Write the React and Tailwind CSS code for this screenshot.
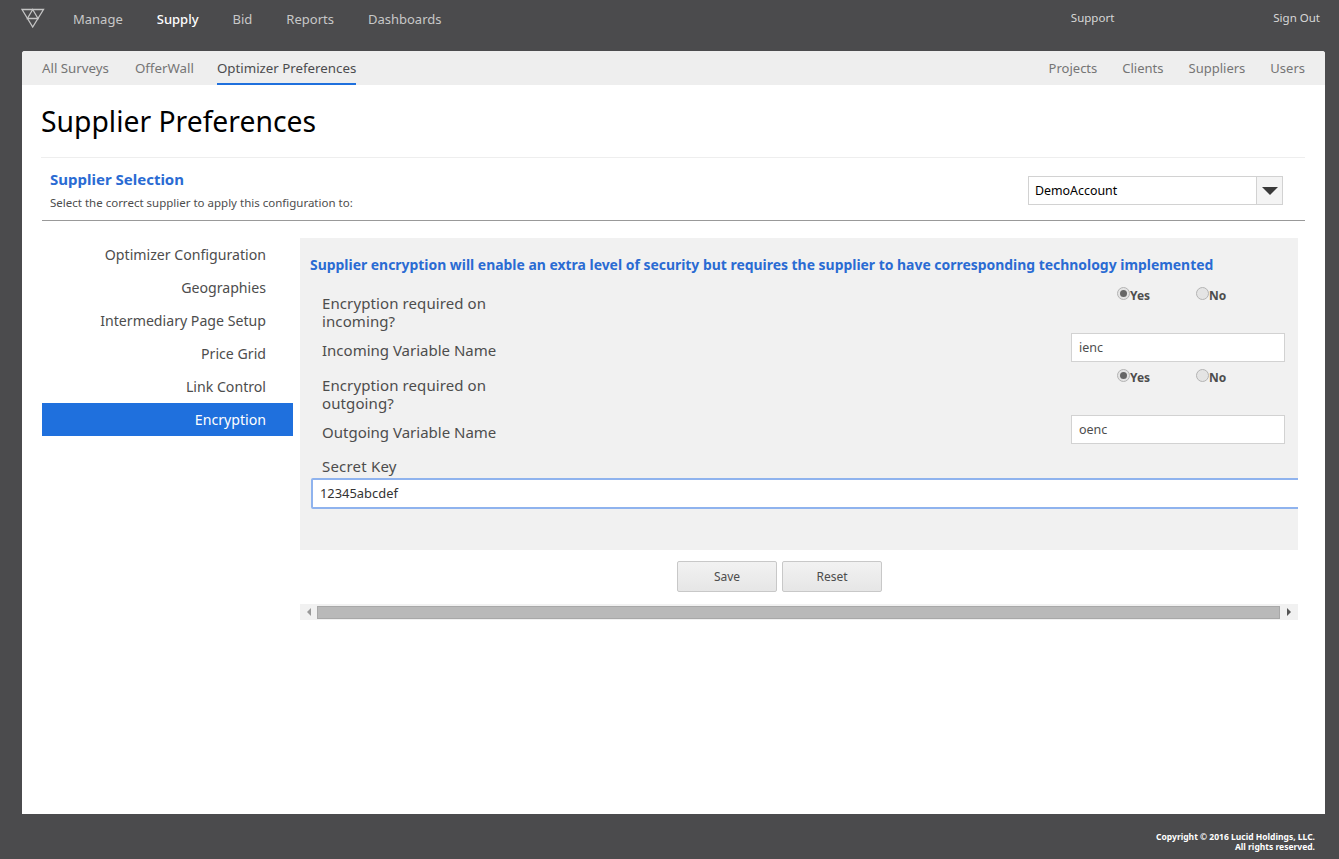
const font = "font-['Noto_Sans','Open_Sans',sans-serif]";

const mainNav = ['Manage', 'Supply', 'Bid', 'Reports', 'Dashboards'];
const sideNav = ['Optimizer Configuration', 'Geographies', 'Intermediary Page Setup', 'Price Grid', 'Link Control', 'Encryption'];

const Logo = () => (
  <svg width="24" height="20" viewBox="0 0 24 20" fill="none" stroke="#c4c4c4" strokeWidth="1.3">
    <path d="M1 1.5H22.5L11.7 19Z" />
    <path d="M11.7 1.5L17 10.5H6.4Z" />
  </svg>
);

const Radio = ({ checked, label }) => (
  <label className="flex items-start">
    <span className="flex h-[13px] w-[13px] items-center justify-center rounded-full border border-[#b4b4b4] bg-[#e4e4e4]">
      {checked && <span className="h-[7px] w-[7px] rounded-full bg-[#666]" />}
    </span>
    <span className="mt-[1px] text-[12px] leading-[16px] font-bold text-[#4d4d4d]">{label}</span>
  </label>
);

const RadioRow = ({ first, second }) => (
  <div className="flex h-[40px] justify-between pr-[13px] pl-[22px]">
    <div className="w-[200px] pt-[1px] text-[15px] leading-[18px] tracking-[0.1px] text-[#4d4d4d]">
      {first}
      <br />
      {second}
    </div>
    <div className="mt-[-6px] flex w-[168px]">
      <div className="w-[79px]">
        <Radio checked label="Yes" />
      </div>
      <Radio label="No" />
    </div>
  </div>
);

const TextRow = ({ label, value }) => (
  <div className="flex h-[42px] justify-between pr-[13px] pl-[22px]">
    <div className="pt-[8px] text-[15px] leading-[18px] text-[#4d4d4d]">{label}</div>
    <div className="h-[29px] w-[214px] border border-[#d2d2d2] bg-white pl-[7px] text-[12.5px] leading-[27px] text-[#4d4d4d]">{value}</div>
  </div>
);

export default function App() {
  return (
    <div className={`flex h-[859px] flex-col overflow-hidden bg-[#4b4b4d] ${font}`}>
      <header className="flex h-[51px] shrink-0 items-start">
        <div className="mt-[8px] ml-[21px] w-[52px]">
          <Logo />
        </div>
        <nav className="mt-[10px] flex gap-[34px] text-[13px] leading-[18px]">
          {mainNav.map((item) => (
            <span key={item} className={item === 'Supply' ? 'font-medium text-white' : 'text-[#c8c8c8]'}>
              {item}
            </span>
          ))}
        </nav>
        <div className="mt-[10px] ml-auto flex text-[11.5px] leading-[16px] text-[#d8d8d8]">
          <span className="mr-[159px]">Support</span>
          <span className="mr-[19px]">Sign Out</span>
        </div>
      </header>

      <main className="ml-[22px] h-[763px] w-[1303px] shrink-0 rounded-t-[3px] bg-white">
        <div className="flex h-[34px] justify-between rounded-t-[3px] bg-[#eeeeee] px-[20px] leading-[34px] text-[#757575]">
          <div className="flex text-[13.3px]">
            <span className="mr-[26px]">All Surveys</span>
            <span className="mr-[23px]">OfferWall</span>
            <span className="h-[34px] border-b-2 border-[#1f70dd] text-[#4b4b4d]">Optimizer Preferences</span>
          </div>
          <div className="flex gap-[25px] text-[13px]">
            <span>Projects</span>
            <span>Clients</span>
            <span>Suppliers</span>
            <span>Users</span>
          </div>
        </div>

        <div className="px-[20px]">
          <h1 className="ml-[-1px] h-[73px] border-b border-[#eeeeee] pt-[16px] text-[28.3px] leading-[40px] font-normal text-black">Supplier Preferences</h1>

          <div className="flex h-[63px] justify-between border-b border-[#999] pr-[22px] pl-[8px]">
            <div>
              <div className="mt-[11px] text-[15px] leading-[20px] font-bold text-[#2a6bd3]">Supplier Selection</div>
              <div className="mt-[6px] text-[11.5px] leading-[15px] text-[#4d4d4d]">Select the correct supplier to apply this configuration to:</div>
            </div>
            <div className="mt-[18px] flex h-[29px] w-[255px] border border-[#d2d2d2]">
              <div className="flex-1 pl-[6px] text-[12.4px] leading-[27px] text-black">DemoAccount</div>
              <div className="flex w-[26px] items-center justify-center border-l border-[#d2d2d2] bg-[#f4f4f4]">
                <span className="h-0 w-0 border-x-[8px] border-t-[8px] border-x-transparent border-t-[#3a3a3a]" />
              </div>
            </div>
          </div>

          <div className="mt-[17px] flex">
            <aside className="w-[251px] shrink-0 text-[14.15px] leading-[33px] text-[#4d4d4d]">
              {sideNav.map((item) => (
                <div key={item} className={`h-[33px] pr-[27px] text-right ${item === 'Encryption' ? 'bg-[#1f70dd] text-white' : ''}`}>
                  {item}
                </div>
              ))}
            </aside>

            <div className="ml-[7px] w-[998px] shrink-0">
              <div className="h-[312px] overflow-hidden bg-[#f1f1f1]">
                <div className="pt-[17px] pl-[10px] text-[13.93px] leading-[19px] font-bold whitespace-nowrap text-[#2a6bd3]">
                  Supplier encryption will enable an extra level of security but requires the supplier to have corresponding technology implemented
                </div>
                <div className="mt-[19px]">
                  <RadioRow first="Encryption required on" second="incoming?" />
                  <TextRow label="Incoming Variable Name" value="ienc" />
                  <RadioRow first="Encryption required on" second="outgoing?" />
                  <TextRow label="Outgoing Variable Name" value="oenc" />
                </div>
                <div className="pl-[22px] text-[15px] leading-[18px] tracking-[0.2px] text-[#4d4d4d]">Secret Key</div>
                <div className="mt-[3px] ml-[11px] h-[31px] w-[1100px] rounded-[2px] border-2 border-[#8fb3ee] bg-white pl-[7px] text-[12.9px] leading-[27px] text-[#333]">12345abcdef</div>
              </div>

              <div className="mt-[11px] flex justify-center gap-[5px] pr-[39px]">
                <button className="h-[31px] w-[100px] rounded-[2px] border border-[#c8c8c8] bg-gradient-to-b from-[#f2f2f2] to-[#e6e6e6] text-[12px] text-[#4d4d4d]">Save</button>
                <button className="h-[31px] w-[100px] rounded-[2px] border border-[#c8c8c8] bg-gradient-to-b from-[#f2f2f2] to-[#e6e6e6] text-[12px] text-[#4d4d4d]">Reset</button>
              </div>

              <div className="mt-[12px] flex h-[16px] items-center bg-[#f1f1f1]">
                <div className="flex w-[17px] justify-center">
                  <span className="h-0 w-0 border-y-[4px] border-r-[4px] border-y-transparent border-r-[#999]" />
                </div>
                <div className="h-[13px] flex-1 border border-[#a8a8a8] bg-[#b9b9b9]" />
                <div className="flex w-[18px] justify-center">
                  <span className="h-0 w-0 border-y-[4px] border-l-[4px] border-y-transparent border-l-[#555]" />
                </div>
              </div>
            </div>
          </div>
        </div>
      </main>

      <footer className="pt-[18px] pr-[24px] text-right text-[8.5px] leading-[10px] font-bold text-white">
        Copyright © 2016 Lucid Holdings, LLC.
        <br />
        All rights reserved.
      </footer>
    </div>
  );
}
